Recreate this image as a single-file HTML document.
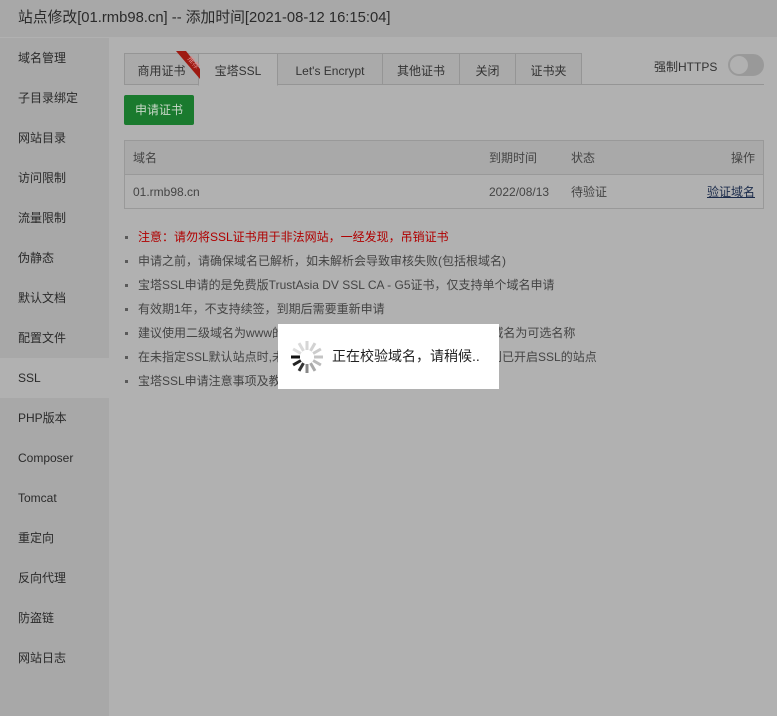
<!DOCTYPE html>
<html><head><meta charset="utf-8"><style>
*{margin:0;padding:0;box-sizing:border-box}
body{width:777px;height:716px;background:#b1b1b1;font-family:"Liberation Sans","Noto Sans CJK SC",sans-serif;font-size:12px;color:#333;position:relative;overflow:hidden}
.title{position:absolute;left:0;top:0;width:777px;height:37px;background:#a8a8a8;font-size:14.8px;line-height:36px;padding-left:18px;color:#2a2a2a}
.side{position:absolute;left:0;top:38px;width:109px;height:678px;background:#a8a8a8}
.side div{height:40px;line-height:40px;padding-left:18px;font-size:12px;color:#2a2a2a}
.side .on{background:#b1b1b1}
.tabs{position:absolute;left:124px;top:53px;height:32px;width:640px;border-bottom:1px solid #959595}
.tab{position:absolute;top:0;height:32px;border:1px solid #959595;background:#aaaaaa;line-height:34px;text-align:center;font-size:12px;color:#333}
.tab.on{background:#b1b1b1;border-bottom-color:#b1b1b1;height:33px}
.https{position:absolute;left:654px;top:58px;font-size:12px;color:#333}
.tog{position:absolute;left:728px;top:54px;width:36px;height:22px;border-radius:11px;background:#999;border:1px solid #9a9a9a}
.tog i{position:absolute;left:1px;top:1px;width:18px;height:18px;border-radius:50%;background:#b1b1b1}
.btn{position:absolute;left:124px;top:95px;width:70px;height:30px;background:#1a7a2e;border-radius:2px;color:#c8d8c8;line-height:30px;text-align:center;font-size:12px}
.tbl{position:absolute;left:124px;top:140px;width:640px;height:69px;border:1px solid #999}
.tbl .h{height:34px;background:#a9a9a9;border-bottom:1px solid #999;position:relative}
.tbl .r{height:33px;position:relative}
.tbl span{position:absolute;top:0;line-height:34px;color:#444}
ul{position:absolute;left:124px;top:227px;list-style:none}
li{height:24px;line-height:20px;padding-left:14px;position:relative;color:#444;font-size:12px}
li:before{content:"";position:absolute;left:1px;top:9px;width:3px;height:3px;background:#5a5a5a}
.load{position:absolute;left:278px;top:324px;width:221px;height:65px;background:#fff}
.load .t{position:absolute;left:54px;top:22px;font-size:14px;color:#222}
</style></head><body>
<div class="title">站点修改[01.rmb98.cn] -- 添加时间[2021-08-12 16:15:04]</div>
<div class="side">
<div>域名管理</div><div>子目录绑定</div><div>网站目录</div><div>访问限制</div><div>流量限制</div><div>伪静态</div><div>默认文档</div><div>配置文件</div><div class="on">SSL</div><div>PHP版本</div><div>Composer</div><div>Tomcat</div><div>重定向</div><div>反向代理</div><div>防盗链</div><div>网站日志</div>
</div>
<div class="tabs">
<div class="tab" style="left:0;width:75px">商用证书</div>
<div class="tab on" style="left:74px;width:80px">宝塔SSL</div>
<div class="tab" style="left:153px;width:106px">Let's Encrypt</div>
<div class="tab" style="left:258px;width:78px">其他证书</div>
<div class="tab" style="left:335px;width:57px">关闭</div>
<div class="tab" style="left:391px;width:67px">证书夹</div>
<svg style="position:absolute;left:50px;top:-2px" width="26" height="30"><polygon points="2,0 12,0 26,18 26,28" fill="#9e1a12"/><text x="12" y="10" font-size="7" fill="#d88" transform="rotate(50 15 10)">推荐</text></svg>
</div>
<div class="https">强制HTTPS</div>
<div class="tog"><i></i></div>
<div class="btn">申请证书</div>
<div class="tbl">
<div class="h"><span style="left:8px">域名</span><span style="left:364px">到期时间</span><span style="left:446px">状态</span><span style="right:8px">操作</span></div>
<div class="r"><span style="left:8px">01.rmb98.cn</span><span style="left:364px">2022/08/13</span><span style="left:446px">待验证</span><span style="right:8px;text-decoration:underline;color:#1a2a4a">验证域名</span></div>
</div>
<ul>
<li style="color:#b00000">注意：请勿将SSL证书用于非法网站，一经发现，吊销证书</li>
<li>申请之前，请确保域名已解析，如未解析会导致审核失败(包括根域名)</li>
<li>宝塔SSL申请的是免费版TrustAsia DV SSL CA - G5证书，仅支持单个域名申请</li>
<li>有效期1年，不支持续签，到期后需要重新申请</li>
<li>建议使用二级域名为www的域名申请证书,此时系统会默认赠送顶级域名为可选名称</li>
<li>在未指定SSL默认站点时,未开启SSL的站点使用HTTPS会直接访问到已开启SSL的站点</li>
<li>宝塔SSL申请注意事项及教程</li>
</ul>
<div class="load">
<svg style="position:absolute;left:12px;top:16px" width="34" height="34" viewBox="-17 -17 34 34">
<g stroke-width="3" stroke-linecap="butt">
<line x1="-7" y1="0" x2="-16" y2="0" stroke="#111"/>
<line x1="-6.1" y1="3.5" x2="-13.9" y2="8" stroke="#222" />
<line x1="-3.5" y1="6.1" x2="-8" y2="13.9" stroke="#333"/>
<line x1="0" y1="7" x2="0" y2="16" stroke="#888"/>
<line x1="3.5" y1="6.1" x2="8" y2="13.9" stroke="#aaa"/>
<line x1="6.1" y1="3.5" x2="13.9" y2="8" stroke="#bbb"/>
<line x1="7" y1="0" x2="16" y2="0" stroke="#c4c4c4"/>
<line x1="6.1" y1="-3.5" x2="13.9" y2="-8" stroke="#ccc"/>
<line x1="3.5" y1="-6.1" x2="8" y2="-13.9" stroke="#d2d2d2"/>
<line x1="0" y1="-7" x2="0" y2="-16" stroke="#d6d6d6"/>
<line x1="-3.5" y1="-6.1" x2="-8" y2="-13.9" stroke="#dadada"/>
<line x1="-6.1" y1="-3.5" x2="-13.9" y2="-8" stroke="#ddd"/>
</g></svg>
<div class="t">正在校验域名，请稍候..</div>
</div>
</body></html>
